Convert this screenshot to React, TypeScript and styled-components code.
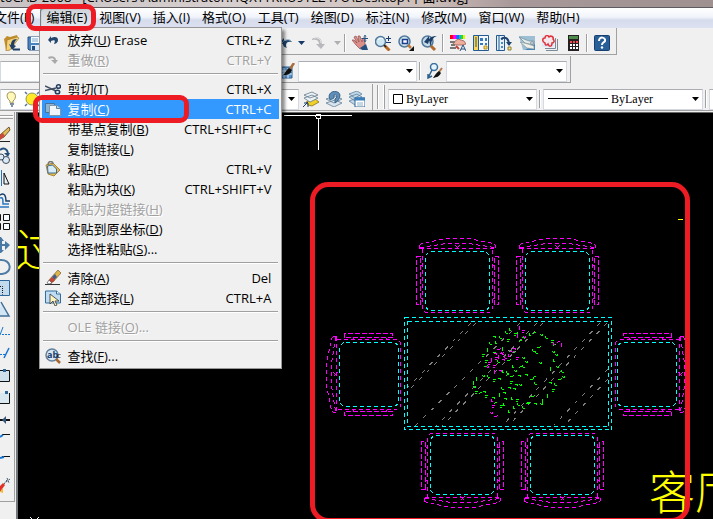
import React from "react";
import styled, { createGlobalStyle, css } from "styled-components";

const GlobalStyle = createGlobalStyle`
  * { box-sizing: border-box; }
  html, body { margin: 0; padding: 0; overflow: hidden; background: #000; }
  body, button, select { font-family: "Open Sans", "Noto Sans CJK SC", sans-serif; font-size: 13px; }
  svg { display: block; flex: none; }
`;

const Frame = styled.div`
  display: flex;
  flex-direction: column;
  height: 100vh;
  overflow: hidden;
  background: #f0f0f0;
`;

const TitleBar = styled.header`
  display: flex;
  align-items: flex-end;
  height: 8px;
  padding-bottom: 2px;
  overflow: hidden;
  white-space: pre;
  line-height: 16px;
  background: linear-gradient(90deg, #c9c3c6 0%, #d8d0cf 35%, #cdbfba 60%, #a8989a 72%, #9e918f 100%);
  border-bottom: 1px solid #5d5b60;
`;

const MenuBar = styled.nav`
  display: flex;
  height: 20px;
  margin-left: -12px;
  flex: none;
  background: linear-gradient(#ffffff 0%, #f1f4fa 45%, #d6dcec 60%, #dce2f2 100%);
`;

const MenuSlot = styled.div`
  position: relative;
`;

const MenuTitle = styled.button<{ $open?: boolean }>`
  height: 20px;
  padding: 0 6px 2px;
  border: 0;
  border-radius: 3px 3px 0 0;
  background: none;
  color: #000;
  line-height: 18px;
  white-space: nowrap;
  ${(p) =>
    p.$open &&
    css`
      background: linear-gradient(#cfd3da, #e4e8ee);
      box-shadow: inset 1px 1px 1px #70747c, inset -1px 0 1px #8c9098;
    `}
`;

const Menu = styled.div`
  position: absolute;
  z-index: 3;
  top: 19px;
  left: -1px;
  width: 243px;
  padding: 2px;
  background: #f0f0f0;
  border: 1px solid #979797;
  box-shadow: 3px 3px 3px rgba(0, 0, 0, 0.45);
`;

const MenuItem = styled.button<{ $active?: boolean }>`
  position: relative;
  display: flex;
  align-items: center;
  width: 100%;
  height: 20px;
  padding: 0 8px 0 3px;
  border: 0;
  color: ${(p) => (p.$active ? "#fff" : "#000")};
  background: ${(p) => (p.$active ? "#3399ff" : "transparent")};
  line-height: 20px;
  white-space: nowrap;
  &:disabled { color: #a0a0a0; text-shadow: 1px 1px 0 #fff; }
`;

const ItemIcon = styled.span`
  display: flex;
  width: 22px;
`;

const ItemText = styled.span`
  flex: 1;
  text-align: left;
`;

const Divider = styled.hr`
  height: 9px;
  margin: 0 1px;
  border: 0;
  background: linear-gradient(transparent 3px, #a0a0a0 3px, #a0a0a0 4px, #fff 4px, #fff 5px, transparent 5px);
`;

const Mark = styled.span<{ $place: "title" | "item" }>`
  position: absolute;
  z-index: 4;
  pointer-events: none;
  border: 5px solid #ed1c24;
  border-radius: 9px;
  ${(p) =>
    p.$place === "title"
      ? css`top: -4px; left: -14px; width: 70px; height: 27px;`
      : css`top: -4px; left: -9px; width: 156px; height: 28px;`}
`;

const ToolRow = styled.div`
  display: flex;
  flex: none;
  height: 28px;
`;

const Toolbar = styled.div`
  display: flex;
  align-items: center;
  flex: none;
  height: 27px;
  padding-top: 4px;
  border-right: 1px solid #a0a0a0;
  border-bottom: 1px solid #a0a0a0;
`;

const Tool = styled.button<{ $w?: number }>`
  display: flex;
  align-items: center;
  justify-content: center;
  flex: none;
  width: ${(p) => p.$w ?? 23}px;
  height: 22px;
  padding: 0;
  border: 0;
  background: none;
  overflow: hidden;
`;

const ToolGap = styled.span<{ $w: number }>`
  flex: none;
  width: ${(p) => p.$w}px;
`;

const Bar = styled.span`
  width: 6px;
  height: 18px;
  flex: none;
  background: linear-gradient(90deg, transparent 2px, #a0a0a0 2px, #a0a0a0 3px, #fff 3px, #fff 4px, transparent 4px);
`;

const Grip = styled.span`
  flex: none;
  width: 8px;
  height: 24px;
  margin: 0 3px 4px 4px;
  border: solid #a0a0a0;
  border-width: 0 1px;
  background: linear-gradient(90deg, #fff 1px, #f0f0f0 1px, #f0f0f0 5px, #fff 5px);
`;

const Combo = styled.label<{ $w: number }>`
  display: flex;
  align-items: center;
  flex: none;
  width: ${(p) => p.$w}px;
  height: 21px;
  padding: 0 3px 0 4px;
  gap: 3px;
  background: #fff;
  border: 1px solid #d5d9e2;
  border-top-color: #abadb3;
`;

const Choice = styled.select`
  appearance: none;
  flex: 1;
  min-width: 0;
  padding: 0;
  border: 0;
  background: none;
  color: #000;
  font: 12px "Liberation Serif", serif;
`;

const Body = styled.div`
  display: flex;
  flex: 1;
  min-height: 0;
`;

const SideBar = styled.aside`
  width: 18px;
  flex: none;
  padding-right: 1px;
  border-right: 2px solid #73767a;
  background: #f0f0f0;
`;

const SideTools = styled.div`
  display: flex;
  flex-direction: column;
  padding-bottom: 4px;
  border-right: 1px solid #a0a0a0;
  border-bottom: 1px solid #a0a0a0;
`;

const SideGrip = styled.span`
  height: 8px;
  margin: 3px 1px 0 0;
  background: linear-gradient(#a0a0a0 1px, #fff 1px, #fff 2px, #f0f0f0 2px, #f0f0f0 3px, #a0a0a0 3px, #a0a0a0 4px, transparent 4px);
`;

const SideTool = styled.button`
  height: 22px;
  padding: 0;
  border: 0;
  background: none;
`;

const Canvas = styled.main`
  flex: 1;
  min-width: 0;
  overflow: hidden;
  background: #000;
  border-top: 1px solid #696969;
`;

/* ---------- toolbar drawings ---------- */

const drawings: Record<string, React.ReactNode> = {
  open: (
    <>
      <path d="M0 4l3-3 3 1 7-2 1 3-2 2-8 9-2 1z" fill="#c08e2b" />
      <path d="M3 5l10-3 2 1-9 12-4 1z" fill="#f5d27a" stroke="#a87920" strokeWidth=".7" />
      <path d="M13 4c-5 0-6 3-6 6l-2-1 3 6 4-4-2-1c0-2 1-4 3-6z" fill="#1f3f66" />
      <path d="M9 14.500h7" stroke="#1f3f66" strokeWidth="2" />
    </>
  ),
  save: (
    <>
      <path d="M1 2h14v13H2l-1-1z" fill="#4a84c0" stroke="#244e80" />
      <path d="M4 2h8v6H4z" fill="#f4faff" />
      <path d="M5 4h6M5 6h6" stroke="#83a9cb" />
      <path d="M4 10h8v5H4z" fill="#dce9f5" />
      <path d="M5 11h3v4H5z" fill="#244e80" />
    </>
  ),
  undo: (
    <>
      <path d="M1 8l5-5v3c4-2 7-1 8 1-3-1-6 0-6 3 0 2 1 3 1 3C6 12 5 11 5 9z" fill="#1f466f" />
      <path d="M4 8c2-3 5-4 8-3" stroke="#8db1d1" fill="none" />
    </>
  ),
  redo: (
    <>
      <path d="M1 4c5-4 10-1 10 5h3l-4 5-5-5h3c0-4-3-5-7-4z" fill="#b9b9bd" />
      <path d="M3 3c4-1 7 1 7 5" stroke="#eee" fill="none" />
    </>
  ),
  undoSmall: <path d="M3 8l3-4v2c4-2 7-1 7 2s-3 4-4 4c1-2 2-5-3-3v2z" fill="#24466c" />,
  redoSmall: <path d="M3 5c4-2 8 0 8 3h2l-3 4-4-4h3c0-2-3-2-5-1z" fill="#a9a9a9" />,
  pan: (
    <>
      <path d="M0 5l2 0 3 3-3-6 2-1 3 6-1-6 2 0 2 6 1-4 1.500 0 .5 6-1 4-4 1-4-4z" fill="#dc8f88" stroke="#8f4f4f" strokeWidth=".7" />
      <path d="M8 13l6-4 2 6h-6z" fill="#24507f" />
      <path d="M13 0v7M9.500 3.500h6.500M12 1.500l1-1 1 1M12 5.500l1 1 1-1" stroke="#234d7b" fill="none" />
    </>
  ),
  zoom: (
    <>
      <circle cx="5.500" cy="6.500" r="5" fill="#d0e7f4" stroke="#52799c" strokeWidth="1.500" />
      <path d="M9.500 10.500l5 5" stroke="#b56929" strokeWidth="3" />
      <path d="M9 10l2 2" stroke="#222" strokeWidth="1.500" />
      <path d="M3 5c1-2 3-2 5-1" stroke="#fff" fill="none" />
      <path d="M11 3.500h5M13.500 1v5M11 7.500h5" stroke="#183e70" />
    </>
  ),
  zoomWindow: (
    <>
      <circle cx="6.500" cy="6.500" r="5.500" fill="#cce3f0" stroke="#52799c" strokeWidth="1.500" />
      <path d="M4.500 4.500h5v4h-5z" fill="#fff" stroke="#1d3f8c" strokeWidth="1.500" />
      <path d="M10 10l3 3" stroke="#bf7936" strokeWidth="2.500" />
      <path d="M16 11v5h-5z" fill="#111" />
    </>
  ),
  zoomPrevious: (
    <>
      <circle cx="6.500" cy="6.500" r="5.500" fill="#c6dae8" stroke="#52799c" strokeWidth="1.500" />
      <path d="M10 11l4 4" stroke="#b56929" strokeWidth="3" />
      <path d="M3 7l5-6v3c3-3 5-3 8-3-4 1-6 5-6 10-2-3-1-5-2-5l-1 3z" fill="#1c3f69" />
    </>
  ),
  properties: (
    <>
      <path d="M0 0h3v4H0z" fill="#f00" /><path d="M3 0h3v4H3z" fill="#f0f" />
      <path d="M6 0h3v4H6z" fill="#26f" /><path d="M9 0h2v4H9z" fill="#0bd" />
      <path d="M11 0h2v4h-2z" fill="#2d2" /><path d="M13 0h2v4h-2z" fill="#ee0" />
      <path d="M4 7l4-3 6 2 2 3-4 1-6 0-3-1z" fill="#f0ae9c" stroke="#955a52" strokeWidth=".8" />
      <path d="M0 7h5M1 10h4M0 13h6" stroke="#777" strokeWidth="2" />
      <path d="M10 16l3-6 3 6M11 14h4" stroke="#28507c" fill="none" />
      <path d="M6 11l3 3" stroke="#c54339" strokeWidth="2" />
    </>
  ),
  designCenter: (
    <>
      <path d="M.5.5h15v15H.5z" fill="#f4f8fc" stroke="#235b94" />
      <path d="M1 1h4v14H1z" fill="#f7d45c" />
      <path d="M5.500 1v14M2 3h2M2 5h2M2 7h2M2 9h2M2 11h2" stroke="#245787" />
      <path d="M7 3h3v3H7zM12 3h2v3h-2zM7 8h3v2H7zM12 8h2v2h-2z" fill="#367bb7" />
      <path d="M11 11h3v3h-3z" fill="#fbde67" stroke="#b49222" />
    </>
  ),
  palettes: (
    <>
      <path d="M.5.5h8v15h-8z" fill="#e8f0f8" stroke="#235b94" />
      <path d="M3 .5v15" stroke="#235b94" />
      <path d="M5 3h2v2H5zM5 7h2v2H5zM5 11h2v2H5z" fill="#4a8bc4" />
      <path d="M5 4c5-3 8 0 8 6" fill="none" stroke="#1f4673" strokeWidth="2" />
      <path d="M10 7h6l-3 4z" fill="#1f4673" />
      <path d="M12 12h3v3h-3z" fill="#f8e487" stroke="#8b8035" />
    </>
  ),
  sheets: (
    <>
      <path d="M0 1h16v14H4z" fill="#9dbfd4" />
      <path d="M6 15l10-6v6z" fill="#3b82b8" />
      <path d="M0 2l10 4 5 0v4L6 8z" fill="#e4ecea" stroke="#718b99" strokeWidth=".7" />
      <path d="M1 7l8 2 6 2 0 3-7-1z" fill="#efefe6" stroke="#8c9ba3" strokeWidth=".7" />
      <circle cx="13" cy="8" r="1.500" fill="#c7d3d4" stroke="#718b99" strokeWidth=".7" />
    </>
  ),
  markup: (
    <>
      <path d="M4 15.500h11.500V4M3 13.500h10.500V3" fill="none" stroke="#7b8b99" />
      <path d="M0 1h12v11H0z" fill="#dbeaf6" />
      <path d="M3 8c-3-1-3-5 0-5 0-3 3-3 4-1 2-2 5 0 4 2 2 2 1 4-1 4 0 4-3 4-4 1-2 2-3 1-3-1z" fill="#f7e8ed" stroke="#e1303a" strokeWidth="1.500" />
    </>
  ),
  calculator: (
    <>
      <path d="M3 0h11v16H3z" fill="#262023" />
      <path d="M4 1h9v3H4z" fill="#4d8b4b" />
      <path d="M5 7h2M8 7h2M11 7h2" stroke="#f34b4b" strokeWidth="2" />
      <path d="M5 10h2M8 10h2M11 10h2M5 13h2M8 13h2M11 13h2" stroke="#fff" strokeWidth="2" />
    </>
  ),
  help: (
    <>
      <rect x=".5" y=".5" width="15" height="15" rx="1" fill="#285f96" stroke="#163f70" />
      <path d="M5 6c0-5 7-4 6 0-1 2-3 1-3 4" stroke="#fff" strokeWidth="2" fill="none" />
      <circle cx="8" cy="12.500" r="1.200" fill="#fff" />
    </>
  ),
  tableStyle: (
    <>
      <path d="M1 4h12v11H1z" fill="#5f97cc" stroke="#28619a" />
      <path d="M1 8h12M1 11h12M5 5v10M9 5v10" stroke="#dcecf8" />
      <path d="M15 0l-4 6" stroke="#a76c3b" strokeWidth="2.500" />
      <path d="M10 5l3 2c-2 5-5 5-9 5 2-1 3-5 6-7z" fill="#111" />
    </>
  ),
  leader: (
    <>
      <circle cx="7" cy="4" r="3.500" fill="#e5f3fc" stroke="#3b709e" strokeWidth="1.500" />
      <path d="M5 7L1 15M1 11v4l4-2" stroke="#2d628f" fill="none" strokeWidth="1.500" />
      <path d="M15 5l-3 4" stroke="#b37b4a" strokeWidth="2" />
      <path d="M12 8l2 2c-2 4-4 4-8 5 2-3 3-5 6-7z" fill="#111" />
    </>
  ),
  layers: (
    <>
      <path d="M3 11l9-3 4 3-7 4-4-1z" fill="#f0d02a" stroke="#887417" strokeWidth=".8" />
      <path d="M1 7l8-3 6 3-8 4zM1 4l8-3 6 3-8 3z" fill="#edf3f7" stroke="#62788a" strokeWidth=".8" />
      <path d="M0 16l5-5M1 12h4v4" stroke="#173f73" fill="none" />
    </>
  ),
  layerBack: (
    <>
      <path d="M0 12l9-3 7 3-8 4zM0 8l9-3 7 3-8 4z" fill="#d8e5ee" stroke="#637f95" strokeWidth=".8" />
      <path d="M4 9L3 5C4-1 13-1 14 4c0 3-2 6-5 8V8c3-2 2-5-1-4l0 3z" fill="#5f8fb8" stroke="#2a557d" strokeWidth=".8" />
    </>
  ),
  layerStates: (
    <>
      <path d="M0 10l8-3 5 3-7 4zM0 6l8-3 5 3-7 4zM0 3l8-3 5 3-7 4z" fill="#c3d8e6" stroke="#5d83a1" strokeWidth=".8" />
      <path d="M6 7h10v9H6z" fill="#fff" stroke="#316496" />
      <path d="M6 8h10" stroke="#397dba" strokeWidth="3" />
      <path d="M8 12h6M8 14h6" stroke="#8bb1ce" />
    </>
  ),
  cut: (
    <>
      <path d="M0 5l11 5M0 9.500l11-2.500" stroke="#435063" strokeWidth="1.500" />
      <ellipse cx="13.500" cy="5.500" rx="2" ry="1.800" fill="none" stroke="#243d60" strokeWidth="1.500" />
      <ellipse cx="12.500" cy="11" rx="2.200" ry="1.800" fill="none" stroke="#243d60" strokeWidth="1.500" />
    </>
  ),
  copy: (
    <>
      <path d="M.5 2.500h9v9h-9z" fill="#8fb4cf" stroke="#48729a" />
      <path d="M4.500 4.500h7l4 3v7h-11z" fill="#f0f6fa" stroke="#7e97aa" />
      <path d="M11.500 4.500v3h4" fill="#bdd6e8" stroke="#62829b" />
    </>
  ),
  paste: (
    <>
      <path d="M1 4l7-2 7 7-6 6-6-2z" fill="#e3bb52" stroke="#a98635" />
      <path d="M2.500 5l5-1 4 4v4H3z" fill="#d7ebf8" stroke="#3f6c96" />
      <path d="M3 4c0-5 5-4 5-1" fill="none" stroke="#777" strokeWidth="1.500" />
    </>
  ),
  erase: (
    <>
      <path d="M0 14.500h15" stroke="#333" />
      <path d="M13 0l3 3-8 9-4-2z" fill="#dfb44c" stroke="#77602d" strokeWidth=".7" />
      <path d="M10 4l2 3-3 3-2-3z" fill="#455d8b" />
      <path d="M7 7l3 3-4 4-3-2z" fill="#c54339" />
      <path d="M4 10l3 3-3 1-2-1z" fill="#fff" stroke="#555" strokeWidth=".7" />
    </>
  ),
  selectAll: (
    <>
      <path d="M.5 1h11l4 3v9H.5z" fill="#bfdcf2" stroke="#326d9f" />
      <path d="M11.500 1v3h4" fill="#fff" stroke="#326d9f" />
      <path d="M5 4v10l3-3 2 5 2-1-2-4h4z" fill="#fff3bf" stroke="#333" strokeWidth=".8" />
    </>
  ),
  find: (
    <>
      <circle cx="7" cy="7" r="6" fill="#d5e8f5" stroke="#637f9c" strokeWidth="1.500" />
      <path d="M11 11l4 4" stroke="#a4672e" strokeWidth="2.500" />
      <text x="2" y="10" fontSize="9" fontWeight="700" fill="#173d6c">ab</text>
      <text x="12" y="10" fontSize="8" fill="#111">c</text>
    </>
  ),
  bulb: (
    <>
      <path d="M5 10C1 7 1 1 6 1s6 6 2 9v2H5z" fill="#fff9b7" stroke="#a1935f" />
      <path d="M5 13h4M6 15h2" stroke="#58718b" strokeWidth="1.500" />
    </>
  ),
  sun: (
    <>
      <path d="M1 1l2 2M15 1l-2 2M1 15l2-2M15 15l-2-2" stroke="#56728e" strokeWidth="1.500" />
      <circle cx="8" cy="8" r="6" fill="#ffe929" stroke="#8d9a5b" />
    </>
  ),
};

const Glyph = ({ name }: { name: string }) => (
  <svg width="16" height="16" viewBox="0 0 16 16" aria-hidden="true">{drawings[name]}</svg>
);

const Caret = ({ color = "#000" }: { color?: string }) => (
  <svg width="7" height="4" viewBox="0 0 7 4" aria-hidden="true"><path d="M0 0h7L3.500 4z" fill={color} /></svg>
);

const tool = (name: string, w?: number) => (
  <Tool key={name} $w={w} aria-label={name}><Glyph name={name} /></Tool>
);

/* ---------- edit menu ---------- */

type Entry = { label: string; mnemonic: string; tail?: string; keys?: string; icon?: string; disabled?: boolean; active?: boolean } | null;

const entries: Entry[] = [
  { label: "放弃", mnemonic: "U", tail: " Erase", keys: "CTRL+Z", icon: "undoSmall" },
  { label: "重做", mnemonic: "R", keys: "CTRL+Y", icon: "redoSmall", disabled: true },
  null,
  { label: "剪切", mnemonic: "T", keys: "CTRL+X", icon: "cut" },
  { label: "复制", mnemonic: "C", keys: "CTRL+C", icon: "copy", active: true },
  { label: "带基点复制", mnemonic: "B", keys: "CTRL+SHIFT+C" },
  { label: "复制链接", mnemonic: "L" },
  { label: "粘贴", mnemonic: "P", keys: "CTRL+V", icon: "paste" },
  { label: "粘贴为块", mnemonic: "K", keys: "CTRL+SHIFT+V" },
  { label: "粘贴为超链接", mnemonic: "H", disabled: true },
  { label: "粘贴到原坐标", mnemonic: "D" },
  { label: "选择性粘贴", mnemonic: "S", tail: "..." },
  null,
  { label: "清除", mnemonic: "A", keys: "Del", icon: "erase" },
  { label: "全部选择", mnemonic: "L", keys: "CTRL+A", icon: "selectAll" },
  null,
  { label: "OLE 链接", mnemonic: "O", tail: "...", disabled: true },
  null,
  { label: "查找", mnemonic: "F", tail: "...", icon: "find" },
];

const EditMenu = () => (
  <Menu role="menu">
    {entries.map((e, i) =>
      e === null ? (
        <Divider key={i} />
      ) : (
        <MenuItem key={i} role="menuitem" disabled={e.disabled} $active={e.active}>
          <ItemIcon>{e.icon && <Glyph name={e.icon} />}</ItemIcon>
          <ItemText>{e.label}(<u>{e.mnemonic}</u>){e.tail}</ItemText>
          {e.keys && <span>{e.keys}</span>}
          {e.active && <Mark $place="item" />}
        </MenuItem>
      )
    )}
  </Menu>
);

const titles = ["文件(F)", "编辑(E)", "视图(V)", "插入(I)", "格式(O)", "工具(T)", "绘图(D)", "标注(N)", "修改(M)", "窗口(W)", "帮助(H)"];

/* ---------- modify toolbar, cut by the window's left edge ---------- */

const sideDrawings: [string, React.ReactNode][] = [
  ["erase", <><path d="M0 18.500h10" stroke="#222" /><path d="M9 4l1 3-6 7-4 2v-4z" fill="#e2bd59" stroke="#6f5930" /><path d="M0 12l3-2 2 3-5 4z" fill="#c94b3c" /></>],
  ["copy", <><path d="M0 5c4-3 7-1 8 3" fill="none" stroke="#234f7d" strokeWidth="2" /><path d="M4 8h6l-2 4z" fill="#234f7d" /><circle cx="6" cy="15" r="3.500" fill="#dceaf5" stroke="#3b4b5b" /><circle cx="1" cy="12" r="3" fill="#dceaf5" stroke="#3b4b5b" /></>],
  ["mirror", <><path d="M1.500 3v16" stroke="#2670bd" /><path d="M4 6v11h5z" fill="#e4eff7" stroke="#111" /></>],
  ["offset", <><path d="M0 6c5-3 6 2 6 6h4" fill="none" stroke="#173d66" strokeWidth="1.500" /><path d="M0 9c3-1 3 1 3 6h6M0 18h9" fill="none" stroke="#2877c2" strokeWidth="1.500" /></>],
  ["array", <path d="M-4.500 3.500h5v6h-5zM3.500 3.500h6v6h-6zM-4.500 12.500h5v6h-5zM3.500 12.500h6v6h-6z" fill="#f8fbff" stroke="#111" />],
  ["move", <path d="M-1 4h2l3 4H2v3h3V8l5 4-5 5v-4H2v4h2l-3 3h-2z" fill="#4a79a6" />],
  ["rotate", <path d="M0 5c12-1 13 13 2 14l-2 0" fill="none" stroke="#4f7ba5" strokeWidth="2" />],
  ["scale", <><path d="M-1 3.500h10.500v15H-1z" fill="#c3d9ec" stroke="#2f669a" /><path d="M0 9.500h2.500v8" fill="none" stroke="#111" strokeDasharray="1 1" /></>],
  ["stretch", <path d="M1 3l8 14H-1" fill="#d2e5f4" stroke="#426e96" strokeWidth="1.500" />],
  ["trim", <><path d="M0 14L3 6" stroke="#1675d3" /><path d="M2 13.500h8" stroke="#1675d3" strokeDasharray="2 1" /></>],
  ["extend", <><path d="M4 15L9 5" stroke="#1675d3" strokeWidth="1.500" /><path d="M0 11.500h5" stroke="#1675d3" strokeDasharray="2 1" /></>],
  ["break at point", <><path d="M-1 5.500h10.500v11H-1" fill="#cfdfec" stroke="#111" /><path d="M3 4h3v3H3z" fill="#2c679d" /></>],
  ["break", <><path d="M0 6h9v10H0z" fill="#dae8f2" /><path d="M9.500 6v10.500H0" fill="none" stroke="#111" /><path d="M5 4h3v3H5z" fill="#2c679d" /></>],
  ["join", <><path d="M0 11h10" stroke="#111" strokeWidth="2" /><path d="M6 7v8l-4-4z" fill="#36577a" /></>],
  ["chamfer", <><path d="M2 3.500h8" stroke="#111" /><path d="M0 6l3-2" stroke="#1675d3" strokeWidth="2" /></>],
  ["fillet", <><path d="M2 3.500h8" stroke="#111" /><path d="M0 5l4-1" stroke="#1675d3" strokeWidth="2" /></>],
  ["explode", <><path d="M0 11l3-3 2 2-5 7z" fill="#df3228" /><path d="M0 17l3-4v5z" fill="#f2ba31" /><path d="M4 9l3-4M6 7l4-3M7 3l2 5" stroke="#44576a" strokeDasharray="2 1" /></>],
];

/* ---------- drawing area ---------- */

const Chair = ({ at }: { at: string }) => (
  <g transform={at} fill="none" strokeWidth="1">
    <g stroke="#ff00ff">
      <path strokeDasharray="4 3" d="M-38 0H38" />
      <path strokeDasharray="4 3" d="M-35 0V60L-32 64H32L35 60V0" />
      <path strokeDasharray="4 3" d="M-38 -3L-36 -5L-11 -10H11L36 -5L38 -3V0" />
      <path strokeDasharray="4 3" d="M-37 -1L-11 -5H11L37 -1M-38 -4V0" />
      <path strokeDasharray="5 2" d="M-37 8H-41V56H-37ZM37 8H41V56H37Z" />
      <path d="M-2 -3L2 1M2 -3L-2 1M-37 17H-35M-37 50H-35M37 17H35M37 50H35" />
    </g>
    <path stroke="#00ffff" strokeDasharray="4 3" d="M-32 7L-28 3H28L32 7V58L29 62H-29L-32 58Z" />
  </g>
);

const squiggles = ["h2v1l2 -2", "l1 2h2", "v2l2 1", "l2 -2l1 1", "h3m-1 2l-2 1", "l-1 2v2", "m0 1h2l1 2", "l2 2l1 -2"];

const scatter = (points: number[][]) =>
  points.map(([x, y], i) => `M${x} ${y}${squiggles[(i * 5 + x) % squiggles.length]}`).join("");

const leaves: number[][] = [
  [505, 331], [509, 328], [514, 333], [518, 332], [522, 336], [529, 333], [533, 334], [540, 334], [545, 336], [551, 340], [553, 346], [552, 351], [555, 354],
  [553, 359], [551, 367], [556, 366], [561, 370], [562, 376], [558, 379], [554, 383], [552, 389], [548, 394], [543, 399], [540, 403], [534, 402], [531, 396],
  [526, 403], [522, 406], [517, 403], [513, 406], [508, 410], [503, 403], [500, 405], [494, 404], [492, 396], [485, 395], [479, 394], [475, 391], [473, 386],
  [474, 381], [477, 377], [482, 375], [487, 375], [493, 379], [498, 377], [493, 335], [499, 336], [495, 341], [489, 342], [488, 348], [482, 354], [485, 360], [484, 366],
  [493, 351], [503, 347], [508, 350], [512, 352], [522, 357], [525, 361], [522, 365], [519, 368], [525, 373], [530, 379], [534, 382], [518, 374], [514, 370], [510, 376],
  [506, 371], [502, 370], [506, 376], [510, 381], [515, 383], [519, 384], [513, 387], [508, 386], [503, 391], [501, 387], [500, 393], [504, 397], [511, 397], [516, 399],
  [532, 349], [535, 351], [537, 347], [539, 362], [549, 381], [533, 378], [483, 390], [497, 360], [507, 360], [512, 365], [527, 401], [519, 342], [507, 339],
];

const blooms: number[][] = [
  [494, 352], [495, 357], [499, 355], [497, 349], [501, 352], [504, 356], [508, 354], [512, 353], [516, 357], [513, 347], [509, 350], [493, 365], [488, 362], [486, 366],
  [495, 370], [499, 369], [502, 358], [520, 326], [522, 330], [518, 334], [523, 336], [553, 342], [557, 343], [562, 343], [492, 405], [490, 412], [494, 416], [491, 399], [500, 353], [492, 358],
];

const Drawing = () => (
  <svg width="695" height="406" viewBox="18 113 695 406" shapeRendering="crispEdges" role="img" aria-label="Drawing">
    <g stroke="#fff" fill="none">
      <path d="M284 115.500H352M318.500 118V150" />
      <circle cx="318.500" cy="116.500" r="2.500" />
      <path d="M30 517l3 3M39 517l-3 3" />
    </g>
    <g fill="#ffff00" fontFamily='"Noto Sans CJK SC", sans-serif' fontWeight="300" fontSize="46" shapeRendering="auto">
      <text x="15" y="267">过</text>
      <text x="649" y="509">客厅</text>
    </g>
    <path d="M678 219.500h5" stroke="#ff0" />

    <Chair at="translate(457.500 248.500)" />
    <Chair at="translate(557.500 248.500)" />
    <Chair at="translate(462.500 497.500) scale(1 -1)" />
    <Chair at="translate(562.500 497.500) scale(1 -1)" />
    <Chair at="matrix(0 1 1 0 336.500 374.500)" />
    <Chair at="matrix(0 1 -1 0 679.500 374.500)" />

    <g fill="none" stroke="#00ffff" strokeDasharray="4 3">
      <path d="M404.500 317.500H611.500V429.500H404.500Z" />
      <path d="M407.500 321.500H608.500V426.500H407.500Z" />
    </g>
    <path
      d="M471 323L408 387M476 323L408 391M520 323L415 426M537 323L436 426M543 323L442 426M600 323L502 426M607 323L508 426M608 369L554 425M608 379L565 425"
      stroke="#808080"
      strokeDasharray="4 7"
      fill="none"
    />
    <path d={scatter(leaves)} stroke="#00ff00" fill="none" />
    <path d={scatter(blooms)} stroke="#ff00ff" fill="none" />
    <rect x="312.500" y="184.500" width="375" height="336" rx="16" fill="none" stroke="#ed1c24" strokeWidth="5" shapeRendering="auto" />
  </svg>
);

const Swatch = () => (
  <svg width="10" height="10" viewBox="0 0 10 10" aria-hidden="true"><path d="M.5.5h9v9h-9z" fill="#fff" stroke="#000" /></svg>
);

const LineSample = () => (
  <svg width="60" height="2" viewBox="0 0 60 2" aria-hidden="true"><path d="M0 .5h60" stroke="#000" /></svg>
);

export default function App() {
  return (
    <>
      <GlobalStyle />
      <Frame>
        <TitleBar>toCAD 2008 - [C:\Users\Administrator.HQXTYKRU9YLZ47U\Desktop\平面.dwg]</TitleBar>
        <MenuBar>
          {titles.map((t, i) => (
            <MenuSlot key={t}>
              <MenuTitle $open={i === 1}>{t}</MenuTitle>
              {i === 1 && (
                <>
                  <EditMenu />
                  <Mark $place="title" />
                </>
              )}
            </MenuSlot>
          ))}
        </MenuBar>

        <ToolRow>
          <Toolbar>
            {["open", "save"].map((n) => tool(n))}
            <ToolGap $w={230} />
            {tool("undo", 20)}
            <Tool $w={10} aria-label="undo list"><Caret color="#173a68" /></Tool>
            {tool("redo", 26)}
            <Tool $w={10} aria-label="redo list"><Caret color="#b0b0b0" /></Tool>
            <Bar />
            {["pan", "zoom", "zoomWindow", "zoomPrevious"].map((n) => tool(n))}
            <Bar />
            {["properties", "designCenter", "palettes", "sheets", "markup", "calculator"].map((n) => tool(n))}
            <Bar />
            {tool("help")}
            <ToolGap $w={3} />
          </Toolbar>
        </ToolRow>

        <ToolRow>
          <Toolbar>
            <Combo $w={270}><Choice aria-label="Text style" /><Caret /></Combo>
            <ToolGap $w={5} />
            {tool("tableStyle")}
            <Combo $w={119}><Choice aria-label="Table style" /><Caret /></Combo>
            <Bar />
            {tool("leader")}
            <Combo $w={121}><Choice aria-label="Leader style" /><Caret /></Combo>
            <ToolGap $w={3} />
          </Toolbar>
        </ToolRow>

        <ToolRow>
          <Toolbar>
            <Combo $w={299}>
              <Glyph name="bulb" /><Glyph name="sun" />
              <Choice aria-label="Layer" /><Caret />
            </Combo>
            {["layers", "layerBack", "layerStates"].map((n) => tool(n))}
            <ToolGap $w={4} />
          </Toolbar>
          <Toolbar>
            <Grip />
            <Combo $w={149}>
              <Swatch />
              <Choice aria-label="Color"><option>ByLayer</option></Choice><Caret />
            </Combo>
            <Bar />
            <Combo $w={160}>
              <LineSample />
              <Choice aria-label="Linetype"><option>ByLayer</option></Choice><Caret />
            </Combo>
            <Bar />
            <Combo $w={150}><Choice aria-label="Lineweight" /><Caret /></Combo>
          </Toolbar>
        </ToolRow>

        <Body>
          <SideBar>
            <SideTools>
              <SideGrip />
              {sideDrawings.map(([name, art]) => (
                <SideTool key={name} aria-label={name}>
                  <svg width="12" height="22" viewBox="0 0 12 22" aria-hidden="true">{art}</svg>
                </SideTool>
              ))}
            </SideTools>
          </SideBar>
          <Canvas><Drawing /></Canvas>
        </Body>
      </Frame>
    </>
  );
}
